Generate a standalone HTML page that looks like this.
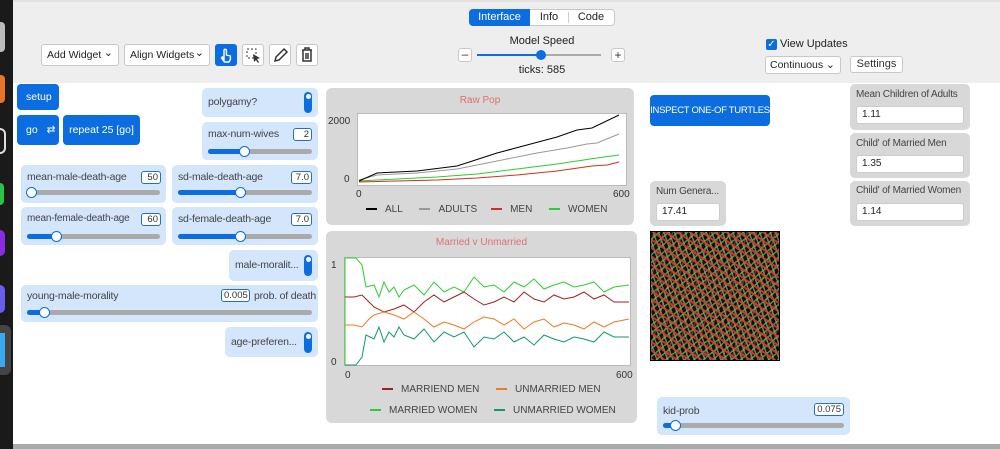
<!DOCTYPE html>
<html><head><style>
*{box-sizing:border-box;margin:0;padding:0}
body{width:1000px;height:449px;overflow:hidden;background:#fff;font-family:"Liberation Sans",sans-serif;font-size:11px;color:#333;position:relative}
.a{position:absolute;white-space:nowrap}
.dock{left:0;top:0;width:13px;height:449px;background:#1a1a1a}
.tb{left:13px;top:0;width:987px;height:83px;background:#eeeeee;border-top:2px solid #e2e2e2}
.sel{background:#fff;border:1px solid #c8c8c8;border-radius:3px;font-size:10.5px;padding:4px 5px;color:#222}
.sel:after{content:"⌄";position:absolute;right:5px;top:1px;font-size:11px}
.ib{background:#fff;border:1px solid #c8c8c8;border-radius:3px}
.btn{background:#0b6de0;color:#fff;border-radius:4px;font-size:10.5px}
.w{background:#d4e6fc;border-radius:5px}
.lbl{font-size:10.5px;color:#444;letter-spacing:-0.2px}
.val{background:#fff;border:1px solid #2a6db8;border-radius:3px;font-size:9.5px;text-align:right;padding:0 2px;height:13px;line-height:11px}
.trk{height:5px;background:#aaa;border-radius:3px}
.fill{height:5px;background:#0b6de0;border-radius:3px}
.th{width:11px;height:11px;border-radius:50%;background:#fff;border:1.5px solid #0b6de0}
.tog{width:8px;height:21px;background:#0b6de0;border-radius:4px}
.tog:after{content:"";position:absolute;left:1.5px;top:2px;width:5px;height:5px;border-radius:50%;background:#fff}
.mon{background:#d8d8d8;border-radius:5px}
.mon .in{background:#fff;border:1px solid #ccc;border-radius:3px;font-size:10px;padding:2px 5px;color:#222}
.plot{background:#d8d8d8;border-radius:6px}
.lg{display:inline-block;width:11px;height:2px;vertical-align:middle;margin-right:8px}
</style></head><body>
<div class="a dock"></div>
<div class="a" style="left:0;top:22px;width:5px;height:30px;background:#bbb;border-radius:0 4px 4px 0"></div>
<div class="a" style="left:0;top:75px;width:5px;height:28px;background:#e8732a;border-radius:0 4px 4px 0"></div>
<div class="a" style="left:0;top:128px;width:6px;height:26px;border:2px solid #ddd;border-left:none;border-radius:0 12px 12px 0"></div>
<div class="a" style="left:0;top:183px;width:4px;height:22px;background:#2bc24a;border-radius:0 4px 4px 0"></div>
<div class="a" style="left:0;top:230px;width:5px;height:26px;background:#8b2be0;border-radius:0 10px 10px 0"></div>
<div class="a" style="left:0;top:285px;width:5px;height:28px;background:#6a5cf0;border-radius:0 10px 10px 0"></div>
<div class="a" style="left:0;top:325px;width:11px;height:50px;background:#444;border-radius:0 6px 6px 0"></div>
<div class="a" style="left:0;top:333px;width:5px;height:34px;background:#3aa8f0"></div>
<div class="a tb"></div>
<div class="a" style="left:13px;top:444px;width:987px;height:5px;background:#aaa"></div>

<!-- tabs -->
<div class="a" style="left:469px;top:9px;width:146px;height:17px;background:#fff;border:1px solid #c8c8c8;border-radius:4px"></div>
<div class="a" style="left:469px;top:9px;width:61px;height:17px;background:#0b6de0;border-radius:4px 0 0 4px;color:#fff;text-align:center;line-height:17px;font-size:11px">Interface</div>
<div class="a" style="left:530px;top:9px;width:38px;height:17px;text-align:center;line-height:17px;font-size:11px;color:#222">Info</div>
<div class="a" style="left:568px;top:12px;width:1px;height:11px;background:#ccc"></div>
<div class="a" style="left:569px;top:9px;width:44px;height:17px;text-align:center;line-height:17px;font-size:11px;color:#222">Code</div>
<div class="a" style="left:500px;top:35px;width:84px;text-align:center;font-size:11px;color:#222">Model Speed</div>
<div class="a ib" style="left:458px;top:48px;width:14px;height:14px;text-align:center;line-height:11px;font-size:12px">–</div>
<div class="a ib" style="left:611px;top:48px;width:14px;height:14px;text-align:center;line-height:12px;font-size:12px">+</div>
<div class="a" style="left:477px;top:54px;width:124px;height:2px;background:#aaa"></div>
<div class="a" style="left:477px;top:54px;width:64px;height:2px;background:#0b6de0"></div>
<div class="a" style="left:536px;top:50px;width:10px;height:10px;border-radius:50%;background:#0b6de0"></div>
<div class="a" style="left:500px;top:64px;width:84px;text-align:center;font-size:11px;color:#222">ticks: 585</div>

<!-- left toolbar -->
<div class="a sel" style="left:41px;top:44px;width:78px;height:22px">Add Widget</div>
<div class="a sel" style="left:124px;top:44px;width:86px;height:22px">Align Widgets</div>
<div class="a" style="left:215px;top:44px;width:22px;height:22px;background:#0b6de0;border-radius:3px"><svg width="22" height="22" viewBox="0 0 22 22"><path d="M9 15V6.5a1.2 1.2 0 0 1 2.4 0V11l4 1v3.5l-1.5 2.5H9.5L6.5 14l1-1z" fill="none" stroke="#fff" stroke-width="1.4"/></svg></div>
<div class="a ib" style="left:242px;top:44px;width:22px;height:22px"><svg width="20" height="20" viewBox="0 0 20 20"><rect x="4" y="4" width="9" height="9" fill="none" stroke="#333" stroke-dasharray="2 2"/><path d="M10 9l7 4-3 1 2 3-1 1-2-3-2 2z" fill="#333"/></svg></div>
<div class="a ib" style="left:269px;top:44px;width:22px;height:22px"><svg width="20" height="20" viewBox="0 0 20 20"><path d="M5 16l1-4 8-8 3 3-8 8z" fill="none" stroke="#333" stroke-width="1.5"/></svg></div>
<div class="a ib" style="left:296px;top:44px;width:22px;height:22px"><svg width="20" height="20" viewBox="0 0 20 20"><path d="M5 5h10M8 5V3h4v2M6 5v11h8V5M9 8v6M11 8v6" fill="none" stroke="#333" stroke-width="1.5"/></svg></div>

<!-- right toolbar -->
<div class="a" style="left:766px;top:39px;width:11px;height:11px;background:#0b6de0;border-radius:2px;color:#fff;font-size:10px;line-height:11px;text-align:center">✓</div>
<div class="a" style="left:780px;top:38px;font-size:11px;color:#222">View Updates</div>
<div class="a sel" style="left:765px;top:56px;width:76px;height:18px;padding:2px 4px">Continuous</div>
<div class="a ib" style="left:850px;top:56px;width:53px;height:17px;text-align:center;line-height:15px;font-size:11px">Settings</div>

<!-- buttons -->
<div class="a btn" style="left:17px;top:84px;width:42px;height:26px;line-height:26px;padding-left:9px">setup</div>
<div class="a btn" style="left:17px;top:115px;width:42px;height:30px;line-height:30px;padding-left:9px">go <span style="margin-left:6px">⇄</span></div>
<div class="a btn" style="left:63px;top:115px;width:77px;height:30px;line-height:30px;text-align:center">repeat 25 [go]</div>

<!-- switches -->
<div class="a w" style="left:202px;top:88px;width:116px;height:29px"><span class="a lbl" style="left:6px;top:8px">polygamy?</span><div class="a tog" style="left:102px;top:4px"></div></div>
<div class="a w" style="left:229px;top:250px;width:89px;height:31px"><span class="a lbl" style="left:6px;top:9px">male-moralit...</span><div class="a tog" style="left:75px;top:5px"></div></div>
<div class="a w" style="left:225px;top:327px;width:93px;height:30px"><span class="a lbl" style="left:6px;top:9px">age-preferen...</span><div class="a tog" style="left:79px;top:5px"></div></div>

<!-- sliders -->
<div class="a w" style="left:202px;top:122px;width:116px;height:38px"><span class="a lbl" style="left:6px;top:6px">max-num-wives</span><div class="a val" style="left:91px;top:6px;width:19px">2</div><div class="a trk" style="left:6px;top:27px;width:104px"></div><div class="a fill" style="left:6px;top:27px;width:36px"></div><div class="a th" style="left:37px;top:24px"></div></div>
<div class="a w" style="left:21px;top:165px;width:145px;height:38px"><span class="a lbl" style="left:6px;top:6px">mean-male-death-age</span><div class="a val" style="left:120px;top:6px;width:20px">50</div><div class="a trk" style="left:6px;top:25px;width:133px"></div><div class="a th" style="left:5px;top:22px"></div></div>
<div class="a w" style="left:172px;top:165px;width:146px;height:38px"><span class="a lbl" style="left:6px;top:6px">sd-male-death-age</span><div class="a val" style="left:119px;top:6px;width:21px">7.0</div><div class="a trk" style="left:6px;top:25px;width:134px"></div><div class="a fill" style="left:6px;top:25px;width:66px"></div><div class="a th" style="left:63px;top:22px"></div></div>
<div class="a w" style="left:21px;top:207px;width:145px;height:38px"><span class="a lbl" style="left:6px;top:6px;font-size:10px">mean-female-death-age</span><div class="a val" style="left:120px;top:6px;width:20px">60</div><div class="a trk" style="left:6px;top:27px;width:133px"></div><div class="a fill" style="left:6px;top:27px;width:30px"></div><div class="a th" style="left:30px;top:24px"></div></div>
<div class="a w" style="left:172px;top:207px;width:146px;height:38px"><span class="a lbl" style="left:6px;top:6px">sd-female-death-age</span><div class="a val" style="left:119px;top:6px;width:21px">7.0</div><div class="a trk" style="left:6px;top:27px;width:134px"></div><div class="a fill" style="left:6px;top:27px;width:66px"></div><div class="a th" style="left:63px;top:24px"></div></div>
<div class="a w" style="left:21px;top:285px;width:297px;height:37px"><span class="a lbl" style="left:6px;top:5px">young-male-morality</span><div class="a val" style="left:200px;top:4px;width:29px">0.005</div><span class="a lbl" style="left:233px;top:5px">prob. of death</span><div class="a trk" style="left:6px;top:25px;width:285px"></div><div class="a fill" style="left:6px;top:25px;width:20px"></div><div class="a th" style="left:18px;top:22px"></div></div>
<div class="a w" style="left:657px;top:397px;width:193px;height:38px"><span class="a lbl" style="left:6px;top:8px">kid-prob</span><div class="a val" style="left:157px;top:6px;width:30px">0.075</div><div class="a trk" style="left:6px;top:26px;width:181px"></div><div class="a fill" style="left:6px;top:26px;width:13px"></div><div class="a th" style="left:13px;top:23px"></div></div>

<!-- plots -->
<div class="a plot" style="left:326px;top:88px;width:308px;height:137px">
<div class="a" style="left:0;top:7px;width:308px;text-align:center;font-size:10px;color:#e07070">Raw Pop</div>
<div class="a" style="left:2px;top:28px;font-size:10px">2000</div>
<div class="a" style="left:18px;top:86px;font-size:10px">0</div>
<div class="a" style="left:31px;top:25px;width:270px;height:73px;background:#fff;border:1px solid #bbb"></div>
<svg class="a" style="left:31px;top:25px" width="270" height="73" viewBox="0 0 270 73">
<polyline fill="none" stroke="#2ecc2e" stroke-width="1" points="2,68 40,66 80,64 120,61 160,56 200,51 240,45 262,42"/>
<polyline fill="none" stroke="#d03020" stroke-width="1" points="2,69 40,68 80,67 120,65 160,62 200,58 235,53 250,52 262,49"/>
<polyline fill="none" stroke="#999" stroke-width="1" points="2,67 20,62 60,60 100,56 140,48 180,40 210,35 230,31 240,30 262,21"/>
<polyline fill="none" stroke="#000" stroke-width="1" points="2,68 20,60 60,58 100,53 140,40 170,32 200,24 220,17 235,15 262,2"/>
</svg>
<div class="a" style="left:30px;top:101px;font-size:10px">0</div>
<div class="a" style="left:287px;top:101px;font-size:10px">600</div>
<div class="a" style="left:40px;top:116px;font-size:10px;color:#444"><span class="lg" style="background:#000"></span>ALL&nbsp;&nbsp;&nbsp;&nbsp;&nbsp;&nbsp;<span class="lg" style="background:#999"></span>ADULTS&nbsp;&nbsp;&nbsp;&nbsp;&nbsp;<span class="lg" style="background:#d03020"></span>MEN&nbsp;&nbsp;&nbsp;&nbsp;&nbsp;&nbsp;<span class="lg" style="background:#2ecc2e"></span>WOMEN</div>
</div>

<div class="a plot" style="left:326px;top:231px;width:311px;height:192px">
<div class="a" style="left:0;top:6px;width:311px;text-align:center;font-size:10px;color:#e07070">Married v Unmarried</div>
<div class="a" style="left:5px;top:29px;font-size:10px">1</div>
<div class="a" style="left:5px;top:126px;font-size:10px">0</div>
<div class="a" style="left:18px;top:26px;width:287px;height:109px;background:#fff;border:1px solid #bbb"></div>
<svg class="a" style="left:18px;top:26px" width="287" height="109" viewBox="0 0 287 109">
<polyline fill="none" stroke="#2ecc2e" points="1,108 1,1 12,1 18,8 22,30 30,28 35,40 40,25 45,35 50,30 55,40 60,33 70,28 80,38 90,25 100,35 110,30 120,35 130,20 140,30 150,28 160,35 170,25 180,30 190,22 200,32 210,28 220,25 230,30 240,28 250,25 260,35 270,30 285,28"/>
<polyline fill="none" stroke="#0e9a6a" points="1,108 1,108 12,108 18,100 22,78 30,82 35,70 40,85 45,75 50,80 55,70 60,78 70,82 80,72 90,85 100,75 110,80 120,75 130,90 140,80 150,82 160,75 170,85 180,80 190,88 200,78 210,82 220,85 230,80 240,82 250,85 260,75 270,80 285,80"/>
<polyline fill="none" stroke="#a02020" points="1,40 10,40 18,38 25,45 30,50 40,55 50,52 60,48 70,55 80,45 90,38 100,45 110,40 120,35 130,42 140,48 150,45 160,40 170,45 180,35 190,42 200,45 210,38 220,42 230,40 240,35 250,42 260,38 270,45 285,45"/>
<polyline fill="none" stroke="#f07820" points="1,68 10,68 18,70 25,62 30,58 40,55 50,58 60,62 70,55 80,62 90,70 100,65 110,68 120,72 130,65 140,60 150,62 160,68 170,62 180,72 190,65 200,62 210,70 220,66 230,68 240,72 250,65 260,70 270,65 285,62"/>
</svg>
<div class="a" style="left:19px;top:139px;font-size:10px">0</div>
<div class="a" style="left:290px;top:139px;font-size:10px">600</div>
<div class="a" style="left:56px;top:153px;font-size:10px;color:#444"><span class="lg" style="background:#a02020"></span>MARRIEND MEN&nbsp;&nbsp;&nbsp;&nbsp;&nbsp;&nbsp;<span class="lg" style="background:#f07820"></span>UNMARRIED MEN</div>
<div class="a" style="left:44px;top:174px;font-size:10px;color:#444"><span class="lg" style="background:#2ecc2e"></span>MARRIED WOMEN&nbsp;&nbsp;&nbsp;&nbsp;&nbsp;&nbsp;<span class="lg" style="background:#0e9a6a"></span>UNMARRIED WOMEN</div>
</div>

<!-- inspect & monitors -->
<div class="a btn" style="left:650px;top:95px;width:120px;height:31px;line-height:31px;text-align:center;font-size:9.5px;letter-spacing:-0.3px">INSPECT ONE-OF TURTLES</div>
<div class="a mon" style="left:850px;top:84px;width:120px;height:46px"><span class="a lbl" style="left:6px;top:5px;font-size:10px">Mean Children of Adults</span><div class="a in" style="left:6px;top:22px;width:108px;height:18px">1.11</div></div>
<div class="a mon" style="left:850px;top:133px;width:120px;height:45px"><span class="a lbl" style="left:6px;top:5px;font-size:10px">Child' of Married Men</span><div class="a in" style="left:6px;top:22px;width:108px;height:18px">1.35</div></div>
<div class="a mon" style="left:850px;top:181px;width:120px;height:45px"><span class="a lbl" style="left:6px;top:4px;font-size:10px">Child' of Married Women</span><div class="a in" style="left:6px;top:22px;width:108px;height:18px">1.14</div></div>
<div class="a mon" style="left:650px;top:181px;width:76px;height:45px"><span class="a lbl" style="left:6px;top:5px;font-size:10px">Num Genera...</span><div class="a in" style="left:6px;top:22px;width:64px;height:18px">17.41</div></div>

<!-- view -->
<div class="a" style="left:650px;top:231px;width:130px;height:130px;border:1.5px solid #000;background:
repeating-linear-gradient(35deg,rgba(220,60,40,.85) 0 2px,transparent 2px 7px),
repeating-linear-gradient(-40deg,rgba(80,200,60,.75) 0 1.5px,transparent 1.5px 6px),
repeating-linear-gradient(70deg,rgba(150,150,150,.75) 0 1.5px,transparent 1.5px 5px),
repeating-linear-gradient(-75deg,rgba(200,60,40,.6) 0 1.5px,transparent 1.5px 9px),#111"></div>
</body></html>
